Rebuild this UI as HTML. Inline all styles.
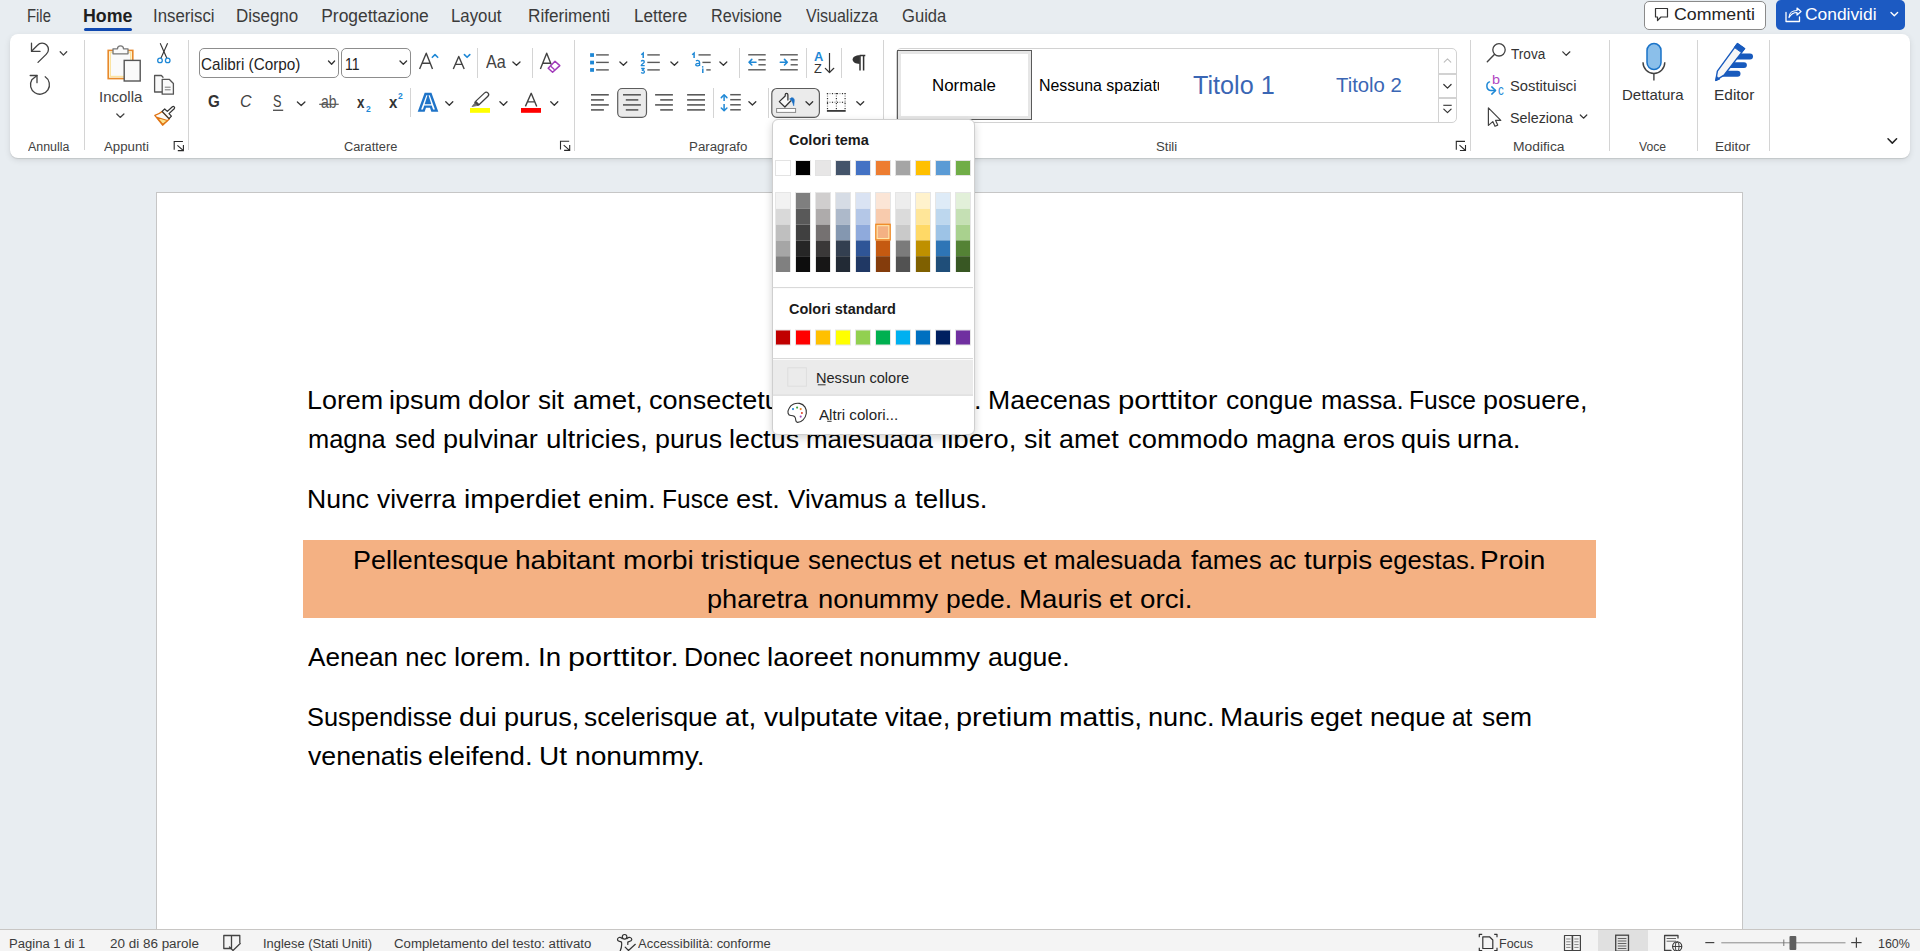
<!DOCTYPE html>
<html><head><meta charset="utf-8"><style>
html,body{margin:0;padding:0;width:1920px;height:951px;overflow:hidden;background:#e8edf1;position:relative;font-family:"Liberation Sans",sans-serif}
.t{position:absolute;white-space:nowrap;transform-origin:0 0}
svg{position:absolute;overflow:visible}
</style></head><body>
<div class="t" style="left:27.15px;top:7.97px;font-size:17.44px;line-height:17.44px;color:#3b3b3b;transform:scaleX(0.8519);">File</div>
<div class="t" style="left:82.98px;top:7.97px;font-size:17.44px;line-height:17.44px;color:#1f1f1f;font-weight:700;transform:scaleX(1.0213);">Home</div>
<div class="t" style="left:153.24px;top:7.97px;font-size:17.44px;line-height:17.44px;color:#3b3b3b;transform:scaleX(0.9629);">Inserisci</div>
<div class="t" style="left:236.43px;top:7.97px;font-size:17.44px;line-height:17.44px;color:#3b3b3b;transform:scaleX(0.9714);">Disegno</div>
<div class="t" style="left:321.20px;top:7.97px;font-size:17.44px;line-height:17.44px;color:#3b3b3b;">Progettazione</div>
<div class="t" style="left:451.44px;top:7.97px;font-size:17.44px;line-height:17.44px;color:#3b3b3b;transform:scaleX(0.9635);">Layout</div>
<div class="t" style="left:527.72px;top:7.97px;font-size:17.44px;line-height:17.44px;color:#3b3b3b;transform:scaleX(0.9841);">Riferimenti</div>
<div class="t" style="left:633.62px;top:7.97px;font-size:17.44px;line-height:17.44px;color:#3b3b3b;transform:scaleX(0.9811);">Lettere</div>
<div class="t" style="left:710.67px;top:7.97px;font-size:17.44px;line-height:17.44px;color:#3b3b3b;transform:scaleX(0.9280);">Revisione</div>
<div class="t" style="left:806.40px;top:7.97px;font-size:17.44px;line-height:17.44px;color:#3b3b3b;transform:scaleX(0.9203);">Visualizza</div>
<div class="t" style="left:902.15px;top:7.97px;font-size:17.44px;line-height:17.44px;color:#3b3b3b;transform:scaleX(0.9522);">Guida</div>
<div style="position:absolute;left:84px;top:28px;width:48px;height:3px;border-radius:2px;background:#0f48b0"></div>
<div style="position:absolute;left:1644px;top:1px;width:122px;height:29px;border:1px solid #8a8a8a;border-radius:5px;background:#fff;box-sizing:border-box"></div>
<div class="t" style="left:1673.55px;top:6.87px;font-size:16.86px;line-height:16.86px;color:#242424;transform:scaleX(1.0533);">Commenti</div>
<div style="position:absolute;left:1776px;top:0px;width:129px;height:30px;border-radius:5px;background:#1c5ac2"></div>
<div class="t" style="left:1805.37px;top:6.87px;font-size:16.86px;line-height:16.86px;color:#fff;transform:scaleX(1.0309);">Condividi</div>
<svg style="position:absolute;left:0;top:0" width="1920" height="951" viewBox="0 0 1920 951"><path d="M1655.5,8.5 H1667.5 V17 H1661 L1657.5,20.5 V17 H1655.5 Z" fill="none" stroke="#333" stroke-width="1.2" stroke-linejoin="round" stroke-linecap="round" /><path d="M1786,12.5 V21.5 H1799.5 V17" fill="none" stroke="#fff" stroke-width="1.3" stroke-linejoin="round" stroke-linecap="round" /><path d="M1789,17.5 C1789,12.5 1793,10.5 1797,10.5 V8 L1801,11.5 L1797,15 V12.5 C1794,12.5 1791,14 1789,17.5 Z" fill="none" stroke="#fff" stroke-width="1.2" stroke-linejoin="round" stroke-linecap="round" /><polyline points="1891,12.5 1894.3,15.8 1897.6,12.5" fill="none" stroke="#fff" stroke-width="1.4" stroke-linecap="round" stroke-linejoin="round"/></svg>
<div style="position:absolute;left:10px;top:34px;width:1900px;height:124px;background:#fff;border-radius:8px;box-shadow:0 1px 1px rgba(0,0,0,0.10),0 2px 6px rgba(0,0,0,0.10)"></div>
<div style="position:absolute;left:84.3px;top:40px;width:1px;height:110px;background:#d4d4d4"></div>
<div style="position:absolute;left:188.2px;top:40px;width:1px;height:110px;background:#d4d4d4"></div>
<div style="position:absolute;left:574.0px;top:40px;width:1px;height:111px;background:#d4d4d4"></div>
<div style="position:absolute;left:883.0px;top:40px;width:1px;height:111px;background:#d4d4d4"></div>
<div style="position:absolute;left:1470.0px;top:40px;width:1px;height:111px;background:#d4d4d4"></div>
<div style="position:absolute;left:1609.1px;top:40px;width:1px;height:111px;background:#d4d4d4"></div>
<div style="position:absolute;left:1696.9px;top:40px;width:1px;height:111px;background:#d4d4d4"></div>
<div style="position:absolute;left:1769.0px;top:40px;width:1px;height:111px;background:#d4d4d4"></div>
<div style="position:absolute;left:477.0px;top:48px;width:1px;height:30px;background:#d4d4d4"></div>
<div style="position:absolute;left:532.0px;top:48px;width:1px;height:30px;background:#d4d4d4"></div>
<div style="position:absolute;left:409.8px;top:88px;width:1px;height:29px;background:#d4d4d4"></div>
<div style="position:absolute;left:739.0px;top:48px;width:1px;height:30px;background:#d4d4d4"></div>
<div style="position:absolute;left:806.1px;top:48px;width:1px;height:30px;background:#d4d4d4"></div>
<div style="position:absolute;left:841.1px;top:48px;width:1px;height:30px;background:#d4d4d4"></div>
<div style="position:absolute;left:713.0px;top:88px;width:1px;height:30px;background:#d4d4d4"></div>
<div style="position:absolute;left:768.0px;top:88px;width:1px;height:30px;background:#d4d4d4"></div>
<div class="t" style="left:28.00px;top:140.88px;font-size:12.50px;line-height:12.50px;color:#424242;transform:scaleX(0.9929);">Annulla</div>
<div class="t" style="left:104.20px;top:140.88px;font-size:12.50px;line-height:12.50px;color:#424242;transform:scaleX(1.0595);">Appunti</div>
<div class="t" style="left:344.40px;top:140.88px;font-size:12.50px;line-height:12.50px;color:#424242;transform:scaleX(1.0231);">Carattere</div>
<div class="t" style="left:688.94px;top:140.88px;font-size:12.50px;line-height:12.50px;color:#424242;transform:scaleX(1.0648);">Paragrafo</div>
<div class="t" style="left:1155.95px;top:140.88px;font-size:12.50px;line-height:12.50px;color:#424242;transform:scaleX(1.0526);">Stili</div>
<div class="t" style="left:1512.64px;top:140.88px;font-size:12.50px;line-height:12.50px;color:#424242;transform:scaleX(1.1076);">Modifica</div>
<div class="t" style="left:1638.75px;top:140.88px;font-size:12.50px;line-height:12.50px;color:#424242;transform:scaleX(0.9732);">Voce</div>
<div class="t" style="left:1714.92px;top:140.88px;font-size:12.50px;line-height:12.50px;color:#424242;transform:scaleX(1.0812);">Editor</div>
<svg style="position:absolute;left:0;top:0" width="1920" height="951" viewBox="0 0 1920 951"><path d="M31.5,43.2 V51.4 H40" fill="none" stroke="#424242" stroke-width="1.3" stroke-linejoin="round" stroke-linecap="round" /><path d="M32,50.8 L37.5,45.2 A6.3,6.3 0 1 1 46.4,54.1 L38,62.4" fill="none" stroke="#424242" stroke-width="1.3" stroke-linejoin="round" stroke-linecap="round" /><polyline points="60.2,51.7 63.4,55.1 66.7,51.7" fill="none" stroke="#424242" stroke-width="1.3" stroke-linecap="round" stroke-linejoin="round"/><path d="M45.2,76.8 A9.5,9.5 0 1 1 31.8,79.8 L37,75.5" fill="none" stroke="#424242" stroke-width="1.3" stroke-linejoin="round" stroke-linecap="round" /><path d="M30.2,75.5 H37 V82.7" fill="none" stroke="#424242" stroke-width="1.3" stroke-linejoin="round" stroke-linecap="round" /><rect x="108.2" y="50.4" width="24.6" height="28.2" rx="0" fill="#fdf6dc" stroke="#e8892b" stroke-width="1.6" /><rect x="110.4" y="52.6" width="20.2" height="23.8" rx="0" fill="#fafafa" stroke="#fbe3a0" stroke-width="1.2" /><path d="M113,53.8 V48.8 H117.5 A3,3 0 0 1 123.5,48.8 H128 V53.8 Z" fill="#fafafa" stroke="#777" stroke-width="1.3" stroke-linejoin="round" stroke-linecap="round" /><rect x="124.2" y="60.4" width="16" height="20.6" rx="0" fill="#fafafa" stroke="#555" stroke-width="1.4" /><polyline points="116.8,114 120.2,117.4 123.9,114" fill="none" stroke="#424242" stroke-width="1.3" stroke-linecap="round" stroke-linejoin="round"/><line x1="160.2" y1="43.3" x2="166.9" y2="58.2" stroke="#333" stroke-width="1.1" stroke-linecap="butt"/><line x1="167.6" y1="43.3" x2="160.9" y2="58.2" stroke="#333" stroke-width="1.1" stroke-linecap="butt"/><circle cx="160" cy="60.4" r="2.3" fill="none" stroke="#1e88d6" stroke-width="1.3"/><circle cx="167.7" cy="60.4" r="2.3" fill="none" stroke="#1e88d6" stroke-width="1.3"/><path d="M162.8,92 H154.6 V75.5 H161.4 L163,77.2" fill="#fafafa" stroke="#555" stroke-width="1.3" stroke-linejoin="round" stroke-linecap="round" /><path d="M162.2,79.3 H169.2 L173.4,83.5 V94.2 H162.2 Z" fill="#fafafa" stroke="#555" stroke-width="1.3" stroke-linejoin="round" stroke-linecap="round" /><line x1="164.8" y1="87.2" x2="170.6" y2="87.2" stroke="#777" stroke-width="1" stroke-linecap="butt"/><line x1="164.8" y1="89.8" x2="170.6" y2="89.8" stroke="#777" stroke-width="1" stroke-linecap="butt"/><path d="M162.1,111.6 C159.6,113.8 157.2,114.8 154.8,115.3 L162.6,125.2 L169.3,119 Z" fill="#fafafa" stroke="#e07312" stroke-width="1.3" stroke-linejoin="round" stroke-linecap="round" /><path d="M156.8,117.2 L167.4,120.6 L162.7,124.4 Z" fill="#fbe38e" stroke="#e07312" stroke-width="1.1" stroke-linejoin="round" stroke-linecap="round" /><path d="M162.1,111.4 L164.7,109 L167.3,111.4 L172.4,106.7 A1.35,1.35 0 0 1 174.2,108.7 L169,113.6 L171.4,116.1 L169.1,118.6 Z" fill="#fafafa" stroke="#333" stroke-width="1.25" stroke-linejoin="round" stroke-linecap="round" /></svg>
<div class="t" style="left:98.51px;top:88.95px;font-size:15.12px;line-height:15.12px;color:#424242;transform:scaleX(0.9930);">Incolla</div>
<div style="position:absolute;left:199px;top:48px;width:140px;height:30px;border:1px solid #8d8d8d;border-radius:5px;box-sizing:border-box;background:#fff"></div>
<div style="position:absolute;left:341px;top:48px;width:70px;height:30px;border:1px solid #8d8d8d;border-radius:5px;box-sizing:border-box;background:#fff"></div>
<div class="t" style="left:201.24px;top:56.51px;font-size:15.99px;line-height:15.99px;color:#242424;transform:scaleX(0.9559);">Calibri (Corpo)</div>
<div class="t" style="left:344.52px;top:56.51px;font-size:15.99px;line-height:15.99px;color:#242424;transform:scaleX(0.8800);">11</div>
<svg style="position:absolute;left:0;top:0" width="1920" height="951" viewBox="0 0 1920 951"><polyline points="328.5,61 331.6,64.3 334.6,61" fill="none" stroke="#333" stroke-width="1.3" stroke-linecap="round" stroke-linejoin="round"/><polyline points="400,61 403.3,64.3 406.6,61" fill="none" stroke="#333" stroke-width="1.3" stroke-linecap="round" stroke-linejoin="round"/><path d="M419.6,69 L426.25,53.2 L432.5,69 M422.1,63.2 H430" fill="none" stroke="#424242" stroke-width="1.4" stroke-linejoin="round" stroke-linecap="butt"/><polyline points="432.3,57.3 435,54.6 437.7,57.3" fill="none" stroke="#1e88d6" stroke-width="1.6" stroke-linecap="round" stroke-linejoin="round"/><path d="M453.3,69 L458.75,56.5 L464.2,69 M455.3,64.4 H462.2" fill="none" stroke="#424242" stroke-width="1.4" stroke-linejoin="round" stroke-linecap="butt"/><polyline points="464.4,54.6 467.1,57.3 469.8,54.6" fill="none" stroke="#1e88d6" stroke-width="1.6" stroke-linecap="round" stroke-linejoin="round"/><polyline points="512.9,62 516.5,65.3 520,62" fill="none" stroke="#333" stroke-width="1.3" stroke-linecap="round" stroke-linejoin="round"/><path d="M540.4,69 L546.7,53.2 L551.2,64.5 M542.8,63.3 H550.5" fill="none" stroke="#424242" stroke-width="1.4" stroke-linejoin="round" stroke-linecap="butt"/><path d="M548.2,68.2 L555,61.3 L559.8,65.6 L552.6,72.3 Z" fill="#fff" stroke="#a23bbb" stroke-width="1.5" stroke-linejoin="round" stroke-linecap="round" /><line x1="550.5" y1="66" x2="554.6" y2="69.8" stroke="#a23bbb" stroke-width="1.3" stroke-linecap="butt"/><line x1="273" y1="110.3" x2="283.2" y2="110.3" stroke="#555" stroke-width="1.4" stroke-linecap="butt"/><polyline points="297.4,102 301.2,105.5 304.9,102" fill="none" stroke="#333" stroke-width="1.3" stroke-linecap="round" stroke-linejoin="round"/><line x1="319.2" y1="104.3" x2="338.7" y2="104.3" stroke="#555" stroke-width="1.2" stroke-linecap="butt"/><path d="M419.4,110.6 L425.5,94 H430.6 L436.6,110.6 H432.2 L430.9,106.6 H425.1 L423.8,110.6 Z M426.3,103 H429.7 L428,97.6 Z" fill="#fff" stroke="#1f74c8" stroke-width="2.4" stroke-linecap="round" stroke-linejoin="miter"/><polyline points="445.75,101.8 449.3,105.3 452.8,101.8" fill="none" stroke="#333" stroke-width="1.3" stroke-linecap="round" stroke-linejoin="round"/><path d="M475,102.8 L472,106.6 L477.6,105.4 Z" fill="#707070" stroke="#707070" stroke-width="0.8" stroke-linejoin="round" stroke-linecap="round" /><path d="M475.6,101.4 L484.6,92.9 A2.3,2.3 0 0 1 487.9,96.2 L479,104.8 Z" fill="#fff" stroke="#424242" stroke-width="1.3" stroke-linejoin="round" stroke-linecap="round" /><path d="M474.9,102.2 L478.1,105.4" fill="none" stroke="#424242" stroke-width="1.3" stroke-linejoin="round" stroke-linecap="round" /><rect x="470" y="108" width="20" height="4.8" rx="0" fill="#ffff00" stroke="none" stroke-width="1" /><polyline points="499.9,101.8 503.5,105.3 507,101.8" fill="none" stroke="#333" stroke-width="1.3" stroke-linecap="round" stroke-linejoin="round"/><path d="M525.4,106.4 L531.2,93.3 L536.75,106.4 M527.3,101.9 H535" fill="none" stroke="#424242" stroke-width="1.4" stroke-linejoin="round" stroke-linecap="butt"/><rect x="521" y="108" width="20" height="4.8" rx="0" fill="#ff0000" stroke="none" stroke-width="1" /><polyline points="550.75,101.8 554.3,105.3 557.8,101.8" fill="none" stroke="#333" stroke-width="1.3" stroke-linecap="round" stroke-linejoin="round"/></svg>
<div class="t" style="left:485.50px;top:54.17px;font-size:17.44px;line-height:17.44px;color:#424242;transform:scaleX(0.9273);">Aa</div>
<div class="t" style="left:208.00px;top:92.92px;font-size:17.15px;line-height:17.15px;color:#333;font-weight:700;transform:scaleX(0.8846);">G</div>
<div class="t" style="left:239.76px;top:93.42px;font-size:17.15px;line-height:17.15px;color:#424242;transform:scaleX(0.9364);font-style:italic;">C</div>
<div class="t" style="left:273.26px;top:93.42px;font-size:17.15px;line-height:17.15px;color:#424242;transform:scaleX(0.7400);">S</div>
<div class="t" style="left:321.00px;top:92.86px;font-size:18.17px;line-height:18.17px;color:#555;transform:scaleX(0.7700);">ab</div>
<div class="t" style="left:357.00px;top:94.46px;font-size:16.28px;line-height:16.28px;color:#333;font-weight:700;transform:scaleX(0.8222);">x</div>
<div class="t" style="left:365.60px;top:105.09px;font-size:9.30px;line-height:9.30px;color:#1e88d6;font-weight:700;transform:scaleX(0.9200);">2</div>
<div class="t" style="left:388.50px;top:94.46px;font-size:16.28px;line-height:16.28px;color:#333;font-weight:700;transform:scaleX(0.9222);">x</div>
<div class="t" style="left:397.70px;top:91.89px;font-size:9.30px;line-height:9.30px;color:#1e88d6;font-weight:700;transform:scaleX(0.9200);">2</div>
<svg style="position:absolute;left:0;top:0" width="1920" height="951" viewBox="0 0 1920 951"><path d="M174.2,149.8 V141.5 H182.89999999999998 M177.39999999999998,145.3 L183.39999999999998,150.6 M183.39999999999998,145.1 V150.6 H177.79999999999998" fill="none" stroke="#2a2a2a" stroke-width="1.1" stroke-linecap="butt" stroke-linejoin="miter"/><path d="M560.5,149.60000000000002 V141.3 H569.2 M563.7,145.10000000000002 L569.7,150.4 M569.7,144.9 V150.4 H564.1" fill="none" stroke="#2a2a2a" stroke-width="1.1" stroke-linecap="butt" stroke-linejoin="miter"/><path d="M1456.3,149.70000000000002 V141.4 H1465.0 M1459.5,145.20000000000002 L1465.5,150.5 M1465.5,145.0 V150.5 H1459.8999999999999" fill="none" stroke="#2a2a2a" stroke-width="1.1" stroke-linecap="butt" stroke-linejoin="miter"/><polyline points="1888,138.8 1892.3,143.1 1896.6,138.8" fill="none" stroke="#222" stroke-width="1.5" stroke-linecap="round" stroke-linejoin="round"/></svg>
<svg style="position:absolute;left:0;top:0" width="1920" height="951" viewBox="0 0 1920 951"><rect x="590.1" y="53.2" width="3.9" height="3.7" rx="0" fill="#1e88d6" stroke="none" stroke-width="1" /><rect x="590.1" y="60.7" width="3.9" height="3.7" rx="0" fill="#1e88d6" stroke="none" stroke-width="1" /><rect x="590.1" y="68.1" width="3.9" height="3.7" rx="0" fill="#1e88d6" stroke="none" stroke-width="1" /><line x1="596.1" y1="54.9" x2="608.8" y2="54.9" stroke="#5a5a5a" stroke-width="1.4" stroke-linecap="butt"/><line x1="596.1" y1="62.4" x2="608.8" y2="62.4" stroke="#5a5a5a" stroke-width="1.4" stroke-linecap="butt"/><line x1="596.1" y1="69.9" x2="608.8" y2="69.9" stroke="#5a5a5a" stroke-width="1.4" stroke-linecap="butt"/><polyline points="619.9,62 623.4,65.2 626.8,62" fill="none" stroke="#333" stroke-width="1.3" stroke-linecap="round" stroke-linejoin="round"/><line x1="647.3" y1="54.9" x2="659.8" y2="54.9" stroke="#5a5a5a" stroke-width="1.4" stroke-linecap="butt"/><line x1="647.3" y1="62.4" x2="659.8" y2="62.4" stroke="#5a5a5a" stroke-width="1.4" stroke-linecap="butt"/><line x1="647.3" y1="69.9" x2="659.8" y2="69.9" stroke="#5a5a5a" stroke-width="1.4" stroke-linecap="butt"/><polyline points="670.9,62 674.4,65.2 677.8,62" fill="none" stroke="#333" stroke-width="1.3" stroke-linecap="round" stroke-linejoin="round"/><line x1="698.5" y1="54.9" x2="710.7" y2="54.9" stroke="#5a5a5a" stroke-width="1.4" stroke-linecap="butt"/><line x1="702.4" y1="62.4" x2="710.7" y2="62.4" stroke="#5a5a5a" stroke-width="1.4" stroke-linecap="butt"/><line x1="706.3" y1="69.9" x2="710.7" y2="69.9" stroke="#5a5a5a" stroke-width="1.4" stroke-linecap="butt"/><polyline points="719.9,62 723.4,65.2 726.8,62" fill="none" stroke="#333" stroke-width="1.3" stroke-linecap="round" stroke-linejoin="round"/><line x1="748.2" y1="54.8" x2="765.7" y2="54.8" stroke="#5a5a5a" stroke-width="1.4" stroke-linecap="butt"/><line x1="758.4" y1="59.8" x2="765.7" y2="59.8" stroke="#5a5a5a" stroke-width="1.4" stroke-linecap="butt"/><line x1="758.4" y1="64.8" x2="765.7" y2="64.8" stroke="#5a5a5a" stroke-width="1.4" stroke-linecap="butt"/><line x1="748.2" y1="69.8" x2="765.7" y2="69.8" stroke="#5a5a5a" stroke-width="1.4" stroke-linecap="butt"/><line x1="780.1" y1="54.8" x2="797.8" y2="54.8" stroke="#5a5a5a" stroke-width="1.4" stroke-linecap="butt"/><line x1="790.6" y1="59.8" x2="797.8" y2="59.8" stroke="#5a5a5a" stroke-width="1.4" stroke-linecap="butt"/><line x1="790.6" y1="64.8" x2="797.8" y2="64.8" stroke="#5a5a5a" stroke-width="1.4" stroke-linecap="butt"/><line x1="780.1" y1="69.8" x2="797.8" y2="69.8" stroke="#5a5a5a" stroke-width="1.4" stroke-linecap="butt"/><path d="M756,62.2 H749 M751.8,59.4 L749,62.2 L751.8,65" fill="none" stroke="#1e88d6" stroke-width="1.6" stroke-linejoin="round" stroke-linecap="round" /><path d="M780.3,62.2 H787.3 M784.5,59.4 L787.3,62.2 L784.5,65" fill="none" stroke="#1e88d6" stroke-width="1.6" stroke-linejoin="round" stroke-linecap="round" /><line x1="829.5" y1="53" x2="829.5" y2="72.4" stroke="#333" stroke-width="1.2" stroke-linecap="butt"/><polyline points="825.3,68.3 829.5,72.5 833.8,68.3" fill="none" stroke="#333" stroke-width="1.2" stroke-linecap="round" stroke-linejoin="round"/><line x1="591" y1="94.8" x2="608.8" y2="94.8" stroke="#5a5a5a" stroke-width="1.6" stroke-linecap="butt"/><line x1="591" y1="99.9" x2="603.9" y2="99.9" stroke="#5a5a5a" stroke-width="1.6" stroke-linecap="butt"/><line x1="591" y1="104.9" x2="608.8" y2="104.9" stroke="#5a5a5a" stroke-width="1.6" stroke-linecap="butt"/><line x1="591" y1="109.9" x2="603.9" y2="109.9" stroke="#5a5a5a" stroke-width="1.6" stroke-linecap="butt"/><rect x="617.7" y="88.5" width="28.8" height="28.8" rx="4.5" fill="#ebebeb" stroke="#5c5c5c" stroke-width="1.2" /><line x1="623" y1="94.8" x2="640.9" y2="94.8" stroke="#5a5a5a" stroke-width="1.6" stroke-linecap="butt"/><line x1="625.8" y1="99.9" x2="638.3" y2="99.9" stroke="#5a5a5a" stroke-width="1.6" stroke-linecap="butt"/><line x1="623" y1="104.9" x2="640.9" y2="104.9" stroke="#5a5a5a" stroke-width="1.6" stroke-linecap="butt"/><line x1="625.8" y1="109.9" x2="638.3" y2="109.9" stroke="#5a5a5a" stroke-width="1.6" stroke-linecap="butt"/><line x1="655.1" y1="94.8" x2="672.9" y2="94.8" stroke="#5a5a5a" stroke-width="1.6" stroke-linecap="butt"/><line x1="660.2" y1="99.9" x2="672.9" y2="99.9" stroke="#5a5a5a" stroke-width="1.6" stroke-linecap="butt"/><line x1="655.1" y1="104.9" x2="672.9" y2="104.9" stroke="#5a5a5a" stroke-width="1.6" stroke-linecap="butt"/><line x1="660.2" y1="109.9" x2="672.9" y2="109.9" stroke="#5a5a5a" stroke-width="1.6" stroke-linecap="butt"/><line x1="687.1" y1="94.8" x2="705" y2="94.8" stroke="#5a5a5a" stroke-width="1.6" stroke-linecap="butt"/><line x1="687.1" y1="99.9" x2="705" y2="99.9" stroke="#5a5a5a" stroke-width="1.6" stroke-linecap="butt"/><line x1="687.1" y1="104.9" x2="705" y2="104.9" stroke="#5a5a5a" stroke-width="1.6" stroke-linecap="butt"/><line x1="687.1" y1="109.9" x2="705" y2="109.9" stroke="#5a5a5a" stroke-width="1.6" stroke-linecap="butt"/><line x1="724.1" y1="95" x2="724.1" y2="101" stroke="#1e88d6" stroke-width="1.5" stroke-linecap="butt"/><polyline points="721.3,97.6 724.1,94.8 726.9,97.6" fill="none" stroke="#1e88d6" stroke-width="1.5" stroke-linecap="round" stroke-linejoin="round"/><line x1="724.1" y1="104" x2="724.1" y2="110.5" stroke="#1e88d6" stroke-width="1.5" stroke-linecap="butt"/><polyline points="721.3,108 724.1,110.8 726.9,108" fill="none" stroke="#1e88d6" stroke-width="1.5" stroke-linecap="round" stroke-linejoin="round"/><line x1="730.2" y1="94.7" x2="740.8" y2="94.7" stroke="#5a5a5a" stroke-width="1.5" stroke-linecap="butt"/><line x1="730.2" y1="99.7" x2="740.8" y2="99.7" stroke="#5a5a5a" stroke-width="1.5" stroke-linecap="butt"/><line x1="730.2" y1="104.8" x2="740.8" y2="104.8" stroke="#5a5a5a" stroke-width="1.5" stroke-linecap="butt"/><line x1="730.2" y1="109.8" x2="740.8" y2="109.8" stroke="#5a5a5a" stroke-width="1.5" stroke-linecap="butt"/><polyline points="748.9,101.7 752.4,105 755.8,101.7" fill="none" stroke="#333" stroke-width="1.3" stroke-linecap="round" stroke-linejoin="round"/><rect x="771.8" y="88.5" width="47.6" height="28.8" rx="5" fill="#ebebeb" stroke="#5c5c5c" stroke-width="1.2" /><path d="M785.3,96 L779.3,101.6 L784.9,107 L790.9,100.8 L788,98.5 Z" fill="#fafafa" stroke="none" stroke-width="0" stroke-linejoin="round" stroke-linecap="round" /><path d="M787.9,100 V94.7 A1.35,1.35 0 0 0 785.2,94.7 V96 L779.3,101.6 L784.9,107 L790.9,100.8" fill="none" stroke="#333" stroke-width="1.25" stroke-linejoin="round" stroke-linecap="round" /><path d="M790.1,99 C790.8,96.8 794.6,97.2 794.3,100.6 L793.7,105.8 C793,103 792,100.6 790.1,99 Z" fill="#1a6fc4" stroke="#1a6fc4" stroke-width="0.6" stroke-linejoin="round" stroke-linecap="round" /><rect x="776.6" y="108.5" width="19" height="3.9" rx="0" fill="#fff" stroke="#8a8a8a" stroke-width="1" /><polyline points="806,101.7 809.4,105 812.7,101.7" fill="none" stroke="#333" stroke-width="1.3" stroke-linecap="round" stroke-linejoin="round"/><rect x="826.9" y="93.0" width="1.2" height="1.2" rx="0" fill="#333" stroke="none" stroke-width="1" /><rect x="826.9" y="101.7" width="1.2" height="1.2" rx="0" fill="#333" stroke="none" stroke-width="1" /><rect x="829.4" y="93.0" width="1.2" height="1.2" rx="0" fill="#9a9a9a" stroke="none" stroke-width="1" /><rect x="829.4" y="101.7" width="1.2" height="1.2" rx="0" fill="#9a9a9a" stroke="none" stroke-width="1" /><rect x="831.9" y="93.0" width="1.2" height="1.2" rx="0" fill="#333" stroke="none" stroke-width="1" /><rect x="831.9" y="101.7" width="1.2" height="1.2" rx="0" fill="#333" stroke="none" stroke-width="1" /><rect x="834.4" y="93.0" width="1.2" height="1.2" rx="0" fill="#9a9a9a" stroke="none" stroke-width="1" /><rect x="834.4" y="101.7" width="1.2" height="1.2" rx="0" fill="#9a9a9a" stroke="none" stroke-width="1" /><rect x="836.9" y="93.0" width="1.2" height="1.2" rx="0" fill="#333" stroke="none" stroke-width="1" /><rect x="836.9" y="101.7" width="1.2" height="1.2" rx="0" fill="#333" stroke="none" stroke-width="1" /><rect x="839.4" y="93.0" width="1.2" height="1.2" rx="0" fill="#9a9a9a" stroke="none" stroke-width="1" /><rect x="839.4" y="101.7" width="1.2" height="1.2" rx="0" fill="#9a9a9a" stroke="none" stroke-width="1" /><rect x="841.9" y="93.0" width="1.2" height="1.2" rx="0" fill="#333" stroke="none" stroke-width="1" /><rect x="841.9" y="101.7" width="1.2" height="1.2" rx="0" fill="#333" stroke="none" stroke-width="1" /><rect x="844.4" y="93.0" width="1.2" height="1.2" rx="0" fill="#9a9a9a" stroke="none" stroke-width="1" /><rect x="844.4" y="101.7" width="1.2" height="1.2" rx="0" fill="#9a9a9a" stroke="none" stroke-width="1" /><rect x="826.9" y="93.0" width="1.2" height="1.2" rx="0" fill="#333" stroke="none" stroke-width="1" /><rect x="835.8" y="93.0" width="1.2" height="1.2" rx="0" fill="#333" stroke="none" stroke-width="1" /><rect x="844.5" y="93.0" width="1.2" height="1.2" rx="0" fill="#333" stroke="none" stroke-width="1" /><rect x="826.9" y="95.5" width="1.2" height="1.2" rx="0" fill="#9a9a9a" stroke="none" stroke-width="1" /><rect x="835.8" y="95.5" width="1.2" height="1.2" rx="0" fill="#9a9a9a" stroke="none" stroke-width="1" /><rect x="844.5" y="95.5" width="1.2" height="1.2" rx="0" fill="#9a9a9a" stroke="none" stroke-width="1" /><rect x="826.9" y="98.0" width="1.2" height="1.2" rx="0" fill="#333" stroke="none" stroke-width="1" /><rect x="835.8" y="98.0" width="1.2" height="1.2" rx="0" fill="#333" stroke="none" stroke-width="1" /><rect x="844.5" y="98.0" width="1.2" height="1.2" rx="0" fill="#333" stroke="none" stroke-width="1" /><rect x="826.9" y="100.5" width="1.2" height="1.2" rx="0" fill="#9a9a9a" stroke="none" stroke-width="1" /><rect x="835.8" y="100.5" width="1.2" height="1.2" rx="0" fill="#9a9a9a" stroke="none" stroke-width="1" /><rect x="844.5" y="100.5" width="1.2" height="1.2" rx="0" fill="#9a9a9a" stroke="none" stroke-width="1" /><rect x="826.9" y="103.0" width="1.2" height="1.2" rx="0" fill="#333" stroke="none" stroke-width="1" /><rect x="835.8" y="103.0" width="1.2" height="1.2" rx="0" fill="#333" stroke="none" stroke-width="1" /><rect x="844.5" y="103.0" width="1.2" height="1.2" rx="0" fill="#333" stroke="none" stroke-width="1" /><rect x="826.9" y="105.5" width="1.2" height="1.2" rx="0" fill="#9a9a9a" stroke="none" stroke-width="1" /><rect x="835.8" y="105.5" width="1.2" height="1.2" rx="0" fill="#9a9a9a" stroke="none" stroke-width="1" /><rect x="844.5" y="105.5" width="1.2" height="1.2" rx="0" fill="#9a9a9a" stroke="none" stroke-width="1" /><rect x="826.9" y="108.0" width="1.2" height="1.2" rx="0" fill="#333" stroke="none" stroke-width="1" /><rect x="835.8" y="108.0" width="1.2" height="1.2" rx="0" fill="#333" stroke="none" stroke-width="1" /><rect x="844.5" y="108.0" width="1.2" height="1.2" rx="0" fill="#333" stroke="none" stroke-width="1" /><line x1="826.9" y1="110.9" x2="845.7" y2="110.9" stroke="#3a3a3a" stroke-width="1.8" stroke-linecap="butt"/><polyline points="856.8,101.7 860.3,105 863.7,101.7" fill="none" stroke="#333" stroke-width="1.3" stroke-linecap="round" stroke-linejoin="round"/></svg>
<svg style="position:absolute;left:0;top:0" width="1920" height="951" viewBox="0 0 1920 951"><path d="M641.3,54.800000000000004 L643.1999999999999,53.2 V58.0" fill="none" stroke="#1e88d6" stroke-width="1.5" stroke-linecap="butt" stroke-linejoin="miter"/><path d="M692.2,54.800000000000004 L694.1,53.2 V58.0" fill="none" stroke="#1e88d6" stroke-width="1.5" stroke-linecap="butt" stroke-linejoin="miter"/><path d="M641.2,61.5 C641.6,60.2 644.3,60 644.3,61.9 C644.3,63.2 641.3,64.3 641.2,65.6 H644.7" fill="none" stroke="#1e88d6" stroke-width="1.3" stroke-linejoin="round" stroke-linecap="butt"/><path d="M641.2,68.5 H644.2 L642.3,70.4 C645,70.2 645.1,73.1 642.6,73.1 C642,73.1 641.5,72.9 641.1,72.6" fill="none" stroke="#1e88d6" stroke-width="1.3" stroke-linejoin="round" stroke-linecap="butt"/><path d="M696,61 C697,60.1 699.6,60.2 699.6,62.4 V66.1 M699.6,63.4 C697.2,63.2 695.7,63.8 695.7,64.8 C695.7,66.2 698.2,66.4 699.6,65" fill="none" stroke="#1e88d6" stroke-width="1.3" stroke-linejoin="round" stroke-linecap="butt"/><circle cx="702.7" cy="66.9" r="0.8" fill="#1e88d6"/><line x1="702.8" y1="68.4" x2="702.8" y2="73.1" stroke="#1e88d6" stroke-width="1.5" stroke-linecap="butt"/></svg>
<div class="t" style="left:813.90px;top:51.43px;font-size:12.79px;line-height:12.79px;color:#1e88d6;font-weight:700;transform:scaleX(1.0111);">A</div>
<div class="t" style="left:814.20px;top:63.02px;font-size:12.21px;line-height:12.21px;color:#333;transform:scaleX(1.0429);">Z</div>
<svg style="position:absolute;left:0;top:0" width="1920" height="951" viewBox="0 0 1920 951"><path d="M859.6,55.6 H865.3 M860,55.6 V70.4 M863.6,55.6 V70.4" fill="none" stroke="#333" stroke-width="1.5" stroke-linejoin="round" stroke-linecap="butt"/><path d="M859.8,55.2 C855.5,55.2 852.6,57 852.6,59.6 C852.6,62.3 855.5,64 859.8,64 Z" fill="#333" stroke="none" stroke-width="0" stroke-linejoin="round" stroke-linecap="round" /></svg>
<div style="position:absolute;left:895.5px;top:48px;width:561.5px;height:74.5px;border:1px solid #d2d2d2;border-radius:5px;box-sizing:border-box;background:#fff"></div>
<div style="position:absolute;left:1438.2px;top:48.5px;width:1px;height:73.5px;background:#d2d2d2"></div>
<div style="position:absolute;left:1438.5px;top:73px;width:18px;height:1.6px;background:#d2d2d2"></div>
<div style="position:absolute;left:1438.5px;top:97px;width:18px;height:1.6px;background:#d2d2d2"></div>
<div style="position:absolute;left:897px;top:50px;width:135px;height:70px;border:1px solid #5a5a5a;box-sizing:border-box;background:#fff"></div>
<div style="position:absolute;left:898px;top:51px;width:133px;height:68px;border:3.5px solid #e6e6e6;box-sizing:border-box"></div>
<div class="t" style="left:931.98px;top:78.12px;font-size:16.57px;line-height:16.57px;color:#000;transform:scaleX(1.0197);">Normale</div>
<div style="position:absolute;left:1036px;top:60px;width:123px;height:50px;overflow:hidden"><div class="t" style="left:2.94px;top:18.12px;font-size:16.57px;line-height:16.57px;color:#000;transform:scaleX(0.9623);">Nessuna spaziatu</div></div>
<div class="t" style="left:1193.30px;top:72.50px;font-size:25.29px;line-height:25.29px;color:#3a66b4;transform:scaleX(0.9963);">Titolo 1</div>
<div class="t" style="left:1336.30px;top:74.66px;font-size:20.64px;line-height:20.64px;color:#3a66b4;transform:scaleX(0.9848);">Titolo 2</div>
<svg style="position:absolute;left:0;top:0" width="1920" height="951" viewBox="0 0 1920 951"><polyline points="1444.2,62.2 1447.5,58.9 1450.8,62.2" fill="none" stroke="#bdbdbd" stroke-width="1.1" stroke-linecap="round" stroke-linejoin="round"/><polyline points="1443.8,84.5 1447.5,88.2 1451.1,84.5" fill="none" stroke="#333" stroke-width="1.2" stroke-linecap="round" stroke-linejoin="round"/><line x1="1443.3" y1="105.3" x2="1451.7" y2="105.3" stroke="#333" stroke-width="1.1" stroke-linecap="butt"/><polyline points="1443.8,109.1 1447.5,112.6 1451.1,109.1" fill="none" stroke="#333" stroke-width="1.2" stroke-linecap="round" stroke-linejoin="round"/></svg>
<svg style="position:absolute;left:0;top:0" width="1920" height="951" viewBox="0 0 1920 951"><circle cx="1499" cy="49.8" r="6.2" fill="none" stroke="#424242" stroke-width="1.3"/><line x1="1494.4" y1="54.4" x2="1487.3" y2="61.8" stroke="#424242" stroke-width="1.4" stroke-linecap="round"/><polyline points="1562.8,51.8 1566.25,55.3 1569.9,51.8" fill="none" stroke="#333" stroke-width="1.2" stroke-linecap="round" stroke-linejoin="round"/><path d="M1489.5,81.9 C1485.8,83.2 1485.8,90.5 1491,90.5 H1495.3" fill="none" stroke="#1e88d6" stroke-width="1.5" stroke-linejoin="round" stroke-linecap="round" /><polyline points="1491.8,86.9 1495.6,90.5 1491.8,94.1" fill="none" stroke="#1e88d6" stroke-width="1.5" stroke-linecap="round" stroke-linejoin="round"/><path d="M1488.4,107.9 L1500.8,120.4 H1495.6 L1497.7,125.1 L1495,126.3 L1492.8,121.6 L1488.4,125.4 Z" fill="#fff" stroke="#424242" stroke-width="1.2" stroke-linejoin="round" stroke-linecap="round" /><polyline points="1580.3,115 1583.5,118.2 1586.8,115" fill="none" stroke="#333" stroke-width="1.2" stroke-linecap="round" stroke-linejoin="round"/><rect x="1647" y="43.6" width="14" height="26" rx="7" fill="#8bbfea" stroke="#1a73c8" stroke-width="1.5"/><path d="M1643,62.3 A10.9,11.2 0 0 0 1664.8,62.3" fill="none" stroke="#424242" stroke-width="1.4" stroke-linejoin="round" stroke-linecap="butt"/><line x1="1653.9" y1="73.5" x2="1653.9" y2="80.6" stroke="#424242" stroke-width="1.4" stroke-linecap="butt"/><path d="M1737,53.4 H1750 A3,3 0 0 1 1750,59.4 H1735 Z" fill="#185abd" stroke="none" stroke-width="0" stroke-linejoin="round" stroke-linecap="round" /><path d="M1731,62.2 H1744 A2.9,2.9 0 0 1 1744,68 H1728 Z" fill="#185abd" stroke="none" stroke-width="0" stroke-linejoin="round" stroke-linecap="round" /><path d="M1724,70.8 H1737.5 A3,3 0 0 1 1737.5,76.8 H1721 Z" fill="#185abd" stroke="none" stroke-width="0" stroke-linejoin="round" stroke-linecap="round" /><path d="M1715.8,80.3 L1717.4,71.2 L1737.5,43.6 L1744.6,48.6 L1724.4,74.8 Z" fill="#f7f7f7" stroke="#185abd" stroke-width="1.4" stroke-linejoin="round" stroke-linecap="round" /><path d="M1737.5,43.6 L1744.6,48.6 L1741.6,52.6 L1734.6,47.6 Z" fill="#185abd" stroke="#185abd" stroke-width="1" stroke-linejoin="round" stroke-linecap="round" /><path d="M1715.8,80.3 L1716.6,76.5 L1719.5,78.8 Z" fill="#185abd" stroke="#185abd" stroke-width="1" stroke-linejoin="round" stroke-linecap="round" /></svg>
<div class="t" style="left:1511.40px;top:46.80px;font-size:14.83px;line-height:14.83px;color:#333;transform:scaleX(0.9184);">Trova</div>
<div class="t" style="left:1510.40px;top:78.80px;font-size:14.83px;line-height:14.83px;color:#333;transform:scaleX(0.9954);">Sostituisci</div>
<div class="t" style="left:1510.43px;top:110.90px;font-size:14.83px;line-height:14.83px;color:#333;transform:scaleX(0.9662);">Seleziona</div>
<div class="t" style="left:1492.08px;top:74.30px;font-size:12.94px;line-height:12.94px;color:#b146c2;transform:scaleX(1.1167);">b</div>
<div class="t" style="left:1498.30px;top:82.99px;font-size:14.24px;line-height:14.24px;color:#1e88d6;transform:scaleX(0.8143);">c</div>
<div class="t" style="left:1621.93px;top:86.90px;font-size:15.41px;line-height:15.41px;color:#333;transform:scaleX(0.9730);">Dettatura</div>
<div class="t" style="left:1713.60px;top:86.90px;font-size:15.41px;line-height:15.41px;color:#333;transform:scaleX(1.0026);">Editor</div>
<div style="position:absolute;left:156px;top:192px;width:1587px;height:737px;background:#fff;border:1px solid #c6c6c6;border-bottom:none;box-sizing:border-box"></div>
<div style="position:absolute;left:303px;top:540px;width:1293px;height:78px;background:#f4b183"></div>
<div class="t" style="left:306.65px;top:388.26px;font-size:25.58px;line-height:25.58px;color:#000;transform:scaleX(1.0507);">Lorem</div>
<div class="t" style="left:389.45px;top:388.26px;font-size:25.58px;line-height:25.58px;color:#000;transform:scaleX(1.0530);">ipsum</div>
<div class="t" style="left:468.41px;top:388.26px;font-size:25.58px;line-height:25.58px;color:#000;transform:scaleX(1.0893);">dolor</div>
<div class="t" style="left:538.48px;top:388.26px;font-size:25.58px;line-height:25.58px;color:#000;transform:scaleX(1.0200);">sit</div>
<div class="t" style="left:573.41px;top:388.26px;font-size:25.58px;line-height:25.58px;color:#000;transform:scaleX(1.0902);">amet,</div>
<div class="t" style="left:648.94px;top:388.26px;font-size:25.58px;line-height:25.58px;color:#000;transform:scaleX(1.0579);">consectetuer adipiscing elit.</div>
<div class="t" style="left:987.92px;top:388.26px;font-size:25.58px;line-height:25.58px;color:#000;transform:scaleX(1.0391);">Maecenas</div>
<div class="t" style="left:1117.60px;top:388.26px;font-size:25.58px;line-height:25.58px;color:#000;transform:scaleX(1.1483);">porttitor</div>
<div class="t" style="left:1226.46px;top:388.26px;font-size:25.58px;line-height:25.58px;color:#000;transform:scaleX(1.0366);">congue</div>
<div class="t" style="left:1321.00px;top:388.26px;font-size:25.58px;line-height:25.58px;color:#000;transform:scaleX(1.0032);">massa.</div>
<div class="t" style="left:1408.57px;top:388.26px;font-size:25.58px;line-height:25.58px;color:#000;transform:scaleX(0.9627);">Fusce</div>
<div class="t" style="left:1483.45px;top:388.26px;font-size:25.58px;line-height:25.58px;color:#000;transform:scaleX(1.0490);">posuere,</div>
<div class="t" style="left:307.76px;top:427.26px;font-size:25.58px;line-height:25.58px;color:#000;transform:scaleX(0.9936);">magna</div>
<div class="t" style="left:394.52px;top:427.26px;font-size:25.58px;line-height:25.58px;color:#000;transform:scaleX(0.9808);">sed</div>
<div class="t" style="left:443.44px;top:427.26px;font-size:25.58px;line-height:25.58px;color:#000;transform:scaleX(1.0590);">pulvinar</div>
<div class="t" style="left:546.41px;top:427.26px;font-size:25.58px;line-height:25.58px;color:#000;transform:scaleX(1.0852);">ultricies,</div>
<div class="t" style="left:655.20px;top:427.26px;font-size:25.58px;line-height:25.58px;color:#000;transform:scaleX(1.0484);">purus</div>
<div class="t" style="left:729.45px;top:427.26px;font-size:25.58px;line-height:25.58px;color:#000;transform:scaleX(1.0500);">lectus</div>
<div class="t" style="left:805.99px;top:427.26px;font-size:25.58px;line-height:25.58px;color:#000;transform:scaleX(1.0140);">malesuada</div>
<div class="t" style="left:941.42px;top:427.26px;font-size:25.58px;line-height:25.58px;color:#000;transform:scaleX(1.0821);">libero,</div>
<div class="t" style="left:1023.95px;top:427.26px;font-size:25.58px;line-height:25.58px;color:#000;transform:scaleX(1.0500);">sit</div>
<div class="t" style="left:1058.95px;top:427.26px;font-size:25.58px;line-height:25.58px;color:#000;transform:scaleX(1.0491);">amet</div>
<div class="t" style="left:1127.68px;top:427.26px;font-size:25.58px;line-height:25.58px;color:#000;transform:scaleX(1.0698);">commodo</div>
<div class="t" style="left:1255.99px;top:427.26px;font-size:25.58px;line-height:25.58px;color:#000;transform:scaleX(1.0064);">magna</div>
<div class="t" style="left:1342.71px;top:427.26px;font-size:25.58px;line-height:25.58px;color:#000;transform:scaleX(1.0417);">eros</div>
<div class="t" style="left:1401.44px;top:427.26px;font-size:25.58px;line-height:25.58px;color:#000;transform:scaleX(1.0556);">quis</div>
<div class="t" style="left:1456.91px;top:427.26px;font-size:25.58px;line-height:25.58px;color:#000;transform:scaleX(1.0909);">urna.</div>
<div class="t" style="left:306.67px;top:487.26px;font-size:25.58px;line-height:25.58px;color:#000;transform:scaleX(1.0395);">Nunc</div>
<div class="t" style="left:377.00px;top:487.26px;font-size:25.58px;line-height:25.58px;color:#000;transform:scaleX(1.0292);">viverra</div>
<div class="t" style="left:464.39px;top:487.26px;font-size:25.58px;line-height:25.58px;color:#000;transform:scaleX(1.1058);">imperdiet</div>
<div class="t" style="left:588.42px;top:487.26px;font-size:25.58px;line-height:25.58px;color:#000;transform:scaleX(1.0833);">enim.</div>
<div class="t" style="left:661.83px;top:487.26px;font-size:25.58px;line-height:25.58px;color:#000;transform:scaleX(0.9590);">Fusce</div>
<div class="t" style="left:735.93px;top:487.26px;font-size:25.58px;line-height:25.58px;color:#000;transform:scaleX(1.0658);">est.</div>
<div class="t" style="left:787.50px;top:487.26px;font-size:25.58px;line-height:25.58px;color:#000;transform:scaleX(1.0180);">Vivamus</div>
<div class="t" style="left:893.66px;top:487.26px;font-size:25.58px;line-height:25.58px;color:#000;transform:scaleX(0.8393);">a</div>
<div class="t" style="left:915.00px;top:487.26px;font-size:25.58px;line-height:25.58px;color:#000;transform:scaleX(1.0846);">tellus.</div>
<div class="t" style="left:353.40px;top:547.56px;font-size:25.58px;line-height:25.58px;color:#000;transform:scaleX(1.0517);">Pellentesque</div>
<div class="t" style="left:515.15px;top:547.56px;font-size:25.58px;line-height:25.58px;color:#000;transform:scaleX(1.0972);">habitant</div>
<div class="t" style="left:622.64px;top:547.56px;font-size:25.58px;line-height:25.58px;color:#000;transform:scaleX(1.1089);">morbi</div>
<div class="t" style="left:701.25px;top:547.56px;font-size:25.58px;line-height:25.58px;color:#000;transform:scaleX(1.1096);">tristique</div>
<div class="t" style="left:807.74px;top:547.56px;font-size:25.58px;line-height:25.58px;color:#000;transform:scaleX(1.0149);">senectus</div>
<div class="t" style="left:918.40px;top:547.56px;font-size:25.58px;line-height:25.58px;color:#000;transform:scaleX(1.0952);">et</div>
<div class="t" style="left:950.20px;top:547.56px;font-size:25.58px;line-height:25.58px;color:#000;transform:scaleX(1.0451);">netus</div>
<div class="t" style="left:1022.62px;top:547.56px;font-size:25.58px;line-height:25.58px;color:#000;transform:scaleX(1.1310);">et</div>
<div class="t" style="left:1054.48px;top:547.56px;font-size:25.58px;line-height:25.58px;color:#000;transform:scaleX(1.0160);">malesuada</div>
<div class="t" style="left:1191.25px;top:547.56px;font-size:25.58px;line-height:25.58px;color:#000;transform:scaleX(1.0145);">fames</div>
<div class="t" style="left:1268.99px;top:547.56px;font-size:25.58px;line-height:25.58px;color:#000;transform:scaleX(1.0096);">ac</div>
<div class="t" style="left:1303.75px;top:547.56px;font-size:25.58px;line-height:25.58px;color:#000;transform:scaleX(1.0887);">turpis</div>
<div class="t" style="left:1378.50px;top:547.56px;font-size:25.58px;line-height:25.58px;color:#000;transform:scaleX(1.0027);">egestas.</div>
<div class="t" style="left:1480.31px;top:547.56px;font-size:25.58px;line-height:25.58px;color:#000;transform:scaleX(1.0938);">Proin</div>
<div class="t" style="left:706.94px;top:586.56px;font-size:25.58px;line-height:25.58px;color:#000;transform:scaleX(1.0605);">pharetra</div>
<div class="t" style="left:817.68px;top:586.56px;font-size:25.58px;line-height:25.58px;color:#000;transform:scaleX(1.0698);">nonummy</div>
<div class="t" style="left:945.97px;top:586.56px;font-size:25.58px;line-height:25.58px;color:#000;transform:scaleX(1.0328);">pede.</div>
<div class="t" style="left:1019.09px;top:586.56px;font-size:25.58px;line-height:25.58px;color:#000;transform:scaleX(1.0811);">Mauris</div>
<div class="t" style="left:1108.93px;top:586.56px;font-size:25.58px;line-height:25.58px;color:#000;transform:scaleX(1.0714);">et</div>
<div class="t" style="left:1140.17px;top:586.56px;font-size:25.58px;line-height:25.58px;color:#000;transform:scaleX(1.0833);">orci.</div>
<div class="t" style="left:307.50px;top:645.26px;font-size:25.58px;line-height:25.58px;color:#000;transform:scaleX(1.0201);">Aenean</div>
<div class="t" style="left:405.25px;top:645.26px;font-size:25.58px;line-height:25.58px;color:#000;">nec</div>
<div class="t" style="left:454.41px;top:645.26px;font-size:25.58px;line-height:25.58px;color:#000;transform:scaleX(1.0882);">lorem.</div>
<div class="t" style="left:538.33px;top:645.26px;font-size:25.58px;line-height:25.58px;color:#000;transform:scaleX(1.0833);">In</div>
<div class="t" style="left:568.30px;top:645.26px;font-size:25.58px;line-height:25.58px;color:#000;transform:scaleX(1.1994);">porttitor.</div>
<div class="t" style="left:684.19px;top:645.26px;font-size:25.58px;line-height:25.58px;color:#000;transform:scaleX(1.0312);">Donec</div>
<div class="t" style="left:766.91px;top:645.26px;font-size:25.58px;line-height:25.58px;color:#000;transform:scaleX(1.0909);">laoreet</div>
<div class="t" style="left:859.42px;top:645.26px;font-size:25.58px;line-height:25.58px;color:#000;transform:scaleX(1.0766);">nonummy</div>
<div class="t" style="left:987.71px;top:645.26px;font-size:25.58px;line-height:25.58px;color:#000;transform:scaleX(1.0433);">augue.</div>
<div class="t" style="left:306.51px;top:705.46px;font-size:25.58px;line-height:25.58px;color:#000;transform:scaleX(0.9914);">Suspendisse</div>
<div class="t" style="left:458.89px;top:705.46px;font-size:25.58px;line-height:25.58px;color:#000;transform:scaleX(1.1094);">dui</div>
<div class="t" style="left:503.94px;top:705.46px;font-size:25.58px;line-height:25.58px;color:#000;transform:scaleX(1.0588);">purus,</div>
<div class="t" style="left:584.47px;top:705.46px;font-size:25.58px;line-height:25.58px;color:#000;transform:scaleX(1.0312);">scelerisque</div>
<div class="t" style="left:725.15px;top:705.46px;font-size:25.58px;line-height:25.58px;color:#000;transform:scaleX(1.1000);">at,</div>
<div class="t" style="left:763.75px;top:705.46px;font-size:25.58px;line-height:25.58px;color:#000;transform:scaleX(1.0995);">vulputate</div>
<div class="t" style="left:885.00px;top:705.46px;font-size:25.58px;line-height:25.58px;color:#000;transform:scaleX(1.0678);">vitae,</div>
<div class="t" style="left:956.37px;top:705.46px;font-size:25.58px;line-height:25.58px;color:#000;transform:scaleX(1.1295);">pretium</div>
<div class="t" style="left:1058.90px;top:705.46px;font-size:25.58px;line-height:25.58px;color:#000;transform:scaleX(1.1042);">mattis,</div>
<div class="t" style="left:1147.69px;top:705.46px;font-size:25.58px;line-height:25.58px;color:#000;transform:scaleX(1.0625);">nunc.</div>
<div class="t" style="left:1220.32px;top:705.46px;font-size:25.58px;line-height:25.58px;color:#000;transform:scaleX(1.0878);">Mauris</div>
<div class="t" style="left:1310.20px;top:705.46px;font-size:25.58px;line-height:25.58px;color:#000;transform:scaleX(1.0459);">eget</div>
<div class="t" style="left:1370.19px;top:705.46px;font-size:25.58px;line-height:25.58px;color:#000;transform:scaleX(1.0616);">neque</div>
<div class="t" style="left:1452.05px;top:705.46px;font-size:25.58px;line-height:25.58px;color:#000;transform:scaleX(0.9524);">at</div>
<div class="t" style="left:1481.97px;top:705.46px;font-size:25.58px;line-height:25.58px;color:#000;transform:scaleX(1.0326);">sem</div>
<div class="t" style="left:307.50px;top:744.26px;font-size:25.58px;line-height:25.58px;color:#000;transform:scaleX(1.0436);">venenatis</div>
<div class="t" style="left:428.42px;top:744.26px;font-size:25.58px;line-height:25.58px;color:#000;transform:scaleX(1.0824);">eleifend.</div>
<div class="t" style="left:539.06px;top:744.26px;font-size:25.58px;line-height:25.58px;color:#000;transform:scaleX(1.0938);">Ut</div>
<div class="t" style="left:575.15px;top:744.26px;font-size:25.58px;line-height:25.58px;color:#000;transform:scaleX(1.1022);">nonummy.</div>
<div style="position:absolute;left:0;top:929px;width:1920px;height:22px;background:#f4f4f4;border-top:1px solid #c8c6c4;box-sizing:border-box"></div>
<div class="t" style="left:9.00px;top:936.88px;font-size:13.08px;line-height:13.08px;color:#3b3b3b;">Pagina 1 di 1</div>
<div class="t" style="left:110.00px;top:936.88px;font-size:13.08px;line-height:13.08px;color:#3b3b3b;transform:scaleX(1.0291);">20 di 86 parole</div>
<div class="t" style="left:262.51px;top:936.88px;font-size:13.08px;line-height:13.08px;color:#3b3b3b;transform:scaleX(0.9862);">Inglese (Stati Uniti)</div>
<div class="t" style="left:394.00px;top:936.88px;font-size:13.08px;line-height:13.08px;color:#3b3b3b;transform:scaleX(1.0128);">Completamento del testo: attivato</div>
<div class="t" style="left:637.50px;top:936.88px;font-size:13.08px;line-height:13.08px;color:#3b3b3b;transform:scaleX(0.9925);">Accessibilità: conforme</div>
<div class="t" style="left:1499.04px;top:936.88px;font-size:13.08px;line-height:13.08px;color:#3b3b3b;transform:scaleX(0.9559);">Focus</div>
<div class="t" style="left:1877.80px;top:936.88px;font-size:13.08px;line-height:13.08px;color:#3b3b3b;transform:scaleX(0.9531);">160%</div>
<svg style="position:absolute;left:0;top:0" width="1920" height="951" viewBox="0 0 1920 951"><path d="M223.8,935.5 H231.5 V948 M231.5,935.5 H239.8 V942.5 M231.5,948.5 L223.8,948.5 V935.5" fill="none" stroke="#424242" stroke-width="1.3" stroke-linejoin="round" stroke-linecap="round" /><polyline points="229.5,947 233,950.5 240.2,943.5" fill="none" stroke="#424242" stroke-width="1.3" stroke-linecap="round" stroke-linejoin="round"/><circle cx="624.6" cy="936.8" r="2.3" fill="none" stroke="#333" stroke-width="1.2"/><path d="M622.2,938.5 C620,936.5 617.5,937.5 617.5,939.5 C617.5,941.5 620.5,941.5 621.5,942 C622,945 621.5,948 620.2,951" fill="none" stroke="#333" stroke-width="1.2" stroke-linejoin="round" stroke-linecap="round" /><path d="M627,938.5 C629,936.5 631.8,937.5 631.8,939.5 C631.8,941 629.5,941.5 627.8,942 V944.5" fill="none" stroke="#333" stroke-width="1.2" stroke-linejoin="round" stroke-linecap="round" /><polyline points="625.2,947.2 628.5,950.5 635.3,944.3" fill="none" stroke="#333" stroke-width="1.2" stroke-linecap="round" stroke-linejoin="round"/><path d="M1479.3,937.2 V934.3 H1482.2 M1494.2,934.3 H1497 V937.2 M1479.3,947.8 V950.7 H1482.2 M1494.2,950.7 H1497 V947.8" fill="none" stroke="#333" stroke-width="1.2" stroke-linejoin="round" stroke-linecap="butt"/><path d="M1482.8,936.8 H1489.5 L1492.8,940 V948.5 H1482.8 Z" fill="none" stroke="#333" stroke-width="1.2" stroke-linejoin="round" stroke-linecap="round" /><path d="M1564.5,935.5 H1572.2 V950.5 H1564.5 Z M1572.6,935.5 H1580.4 V950.5 H1572.6 Z" fill="none" stroke="#424242" stroke-width="1.2" stroke-linejoin="round" stroke-linecap="round" /><line x1="1566.2" y1="939" x2="1570.5" y2="939" stroke="#777" stroke-width="0.9" stroke-linecap="butt"/><line x1="1574.3" y1="939" x2="1578.6" y2="939" stroke="#777" stroke-width="0.9" stroke-linecap="butt"/><line x1="1566.2" y1="941.8" x2="1570.5" y2="941.8" stroke="#777" stroke-width="0.9" stroke-linecap="butt"/><line x1="1574.3" y1="941.8" x2="1578.6" y2="941.8" stroke="#777" stroke-width="0.9" stroke-linecap="butt"/><line x1="1566.2" y1="944.6" x2="1570.5" y2="944.6" stroke="#777" stroke-width="0.9" stroke-linecap="butt"/><line x1="1574.3" y1="944.6" x2="1578.6" y2="944.6" stroke="#777" stroke-width="0.9" stroke-linecap="butt"/><line x1="1566.2" y1="947.4" x2="1570.5" y2="947.4" stroke="#777" stroke-width="0.9" stroke-linecap="butt"/><line x1="1574.3" y1="947.4" x2="1578.6" y2="947.4" stroke="#777" stroke-width="0.9" stroke-linecap="butt"/></svg>
<div style="position:absolute;left:1598px;top:930px;width:50px;height:21px;background:#e0e0e0"></div>
<svg style="position:absolute;left:0;top:0" width="1920" height="951" viewBox="0 0 1920 951"><rect x="1615.7" y="935.2" width="12.8" height="16" rx="0" fill="none" stroke="#424242" stroke-width="1.3" /><line x1="1617.8" y1="938.5" x2="1626.4" y2="938.5" stroke="#555" stroke-width="0.9" stroke-linecap="butt"/><line x1="1617.8" y1="941" x2="1626.4" y2="941" stroke="#555" stroke-width="0.9" stroke-linecap="butt"/><line x1="1617.8" y1="943.5" x2="1626.4" y2="943.5" stroke="#555" stroke-width="0.9" stroke-linecap="butt"/><line x1="1617.8" y1="946" x2="1626.4" y2="946" stroke="#555" stroke-width="0.9" stroke-linecap="butt"/><line x1="1617.8" y1="948.5" x2="1626.4" y2="948.5" stroke="#555" stroke-width="0.9" stroke-linecap="butt"/><path d="M1678,938 V935.5 H1664.6 V950.5 H1671" fill="none" stroke="#424242" stroke-width="1.3" stroke-linejoin="round" stroke-linecap="round" /><line x1="1666.6" y1="938.5" x2="1676" y2="938.5" stroke="#555" stroke-width="0.9" stroke-linecap="butt"/><line x1="1666.6" y1="941.2" x2="1676" y2="941.2" stroke="#555" stroke-width="0.9" stroke-linecap="butt"/><circle cx="1677.2" cy="946.5" r="4.6" fill="#f4f4f4" stroke="#333" stroke-width="1.1"/><ellipse cx="1677.2" cy="946.5" rx="1.9" ry="4.6" fill="none" stroke="#333" stroke-width="0.9"/><line x1="1672.6" y1="946.5" x2="1681.8" y2="946.5" stroke="#333" stroke-width="0.9" stroke-linecap="butt"/><line x1="1705.3" y1="942.6" x2="1714.3" y2="942.6" stroke="#424242" stroke-width="1.2" stroke-linecap="butt"/><line x1="1721.3" y1="942.8" x2="1845.5" y2="942.8" stroke="#8a8a8a" stroke-width="1" stroke-linecap="butt"/><line x1="1783.8" y1="939.5" x2="1783.8" y2="946" stroke="#777" stroke-width="1" stroke-linecap="butt"/><rect x="1789.5" y="936" width="6.8" height="14" rx="1" fill="#5f5f5f" stroke="none" stroke-width="1" /><line x1="1851.2" y1="942.6" x2="1861.6" y2="942.6" stroke="#424242" stroke-width="1.2" stroke-linecap="butt"/><line x1="1856.4" y1="937.4" x2="1856.4" y2="947.8" stroke="#424242" stroke-width="1.2" stroke-linecap="butt"/></svg>
<div style="position:absolute;left:771.5px;top:118.5px;width:203px;height:316px;background:#fff;border:1px solid #cfcfcf;border-radius:6px;box-sizing:border-box;box-shadow:0 3px 8px rgba(0,0,0,0.18)"></div>
<div class="t" style="left:789.30px;top:131.85px;font-size:15.12px;line-height:15.12px;color:#1a1a1a;font-weight:700;transform:scaleX(0.9607);">Colori tema</div>
<div class="t" style="left:789.30px;top:301.35px;font-size:15.12px;line-height:15.12px;color:#1a1a1a;font-weight:700;transform:scaleX(0.9577);">Colori standard</div>
<svg style="position:absolute;left:0;top:0" width="1920" height="951" viewBox="0 0 1920 951"><rect x="775.5" y="160.5" width="15" height="15" rx="0" fill="#FFFFFF" stroke="#e3e3e3" stroke-width="1" /><rect x="795.5" y="160.5" width="15" height="15" rx="0" fill="#000000" stroke="#e3e3e3" stroke-width="1" /><rect x="815.5" y="160.5" width="15" height="15" rx="0" fill="#E7E6E6" stroke="#e3e3e3" stroke-width="1" /><rect x="835.5" y="160.5" width="15" height="15" rx="0" fill="#44546A" stroke="#e3e3e3" stroke-width="1" /><rect x="855.5" y="160.5" width="15" height="15" rx="0" fill="#4472C4" stroke="#e3e3e3" stroke-width="1" /><rect x="875.5" y="160.5" width="15" height="15" rx="0" fill="#ED7D31" stroke="#e3e3e3" stroke-width="1" /><rect x="895.5" y="160.5" width="15" height="15" rx="0" fill="#A5A5A5" stroke="#e3e3e3" stroke-width="1" /><rect x="915.5" y="160.5" width="15" height="15" rx="0" fill="#FFC000" stroke="#e3e3e3" stroke-width="1" /><rect x="935.5" y="160.5" width="15" height="15" rx="0" fill="#5B9BD5" stroke="#e3e3e3" stroke-width="1" /><rect x="955.5" y="160.5" width="15" height="15" rx="0" fill="#70AD47" stroke="#e3e3e3" stroke-width="1" /><rect x="775.5" y="192.5" width="15" height="79" rx="0" fill="none" stroke="#e6e6e6" stroke-width="1" /><rect x="776.0" y="193.0" width="14" height="15.8" rx="0" fill="#F2F2F2" stroke="none" stroke-width="1" /><rect x="776.0" y="208.8" width="14" height="15.8" rx="0" fill="#D9D9D9" stroke="none" stroke-width="1" /><rect x="776.0" y="224.6" width="14" height="15.8" rx="0" fill="#BFBFBF" stroke="none" stroke-width="1" /><rect x="776.0" y="240.4" width="14" height="15.8" rx="0" fill="#A6A6A6" stroke="none" stroke-width="1" /><rect x="776.0" y="256.2" width="14" height="15.8" rx="0" fill="#808080" stroke="none" stroke-width="1" /><rect x="795.5" y="192.5" width="15" height="79" rx="0" fill="none" stroke="#e6e6e6" stroke-width="1" /><rect x="796.0" y="193.0" width="14" height="15.8" rx="0" fill="#7F7F7F" stroke="none" stroke-width="1" /><rect x="796.0" y="208.8" width="14" height="15.8" rx="0" fill="#595959" stroke="none" stroke-width="1" /><rect x="796.0" y="224.6" width="14" height="15.8" rx="0" fill="#404040" stroke="none" stroke-width="1" /><rect x="796.0" y="240.4" width="14" height="15.8" rx="0" fill="#262626" stroke="none" stroke-width="1" /><rect x="796.0" y="256.2" width="14" height="15.8" rx="0" fill="#0D0D0D" stroke="none" stroke-width="1" /><rect x="815.5" y="192.5" width="15" height="79" rx="0" fill="none" stroke="#e6e6e6" stroke-width="1" /><rect x="816.0" y="193.0" width="14" height="15.8" rx="0" fill="#D0CECE" stroke="none" stroke-width="1" /><rect x="816.0" y="208.8" width="14" height="15.8" rx="0" fill="#AEABAB" stroke="none" stroke-width="1" /><rect x="816.0" y="224.6" width="14" height="15.8" rx="0" fill="#757171" stroke="none" stroke-width="1" /><rect x="816.0" y="240.4" width="14" height="15.8" rx="0" fill="#3A3838" stroke="none" stroke-width="1" /><rect x="816.0" y="256.2" width="14" height="15.8" rx="0" fill="#171616" stroke="none" stroke-width="1" /><rect x="835.5" y="192.5" width="15" height="79" rx="0" fill="none" stroke="#e6e6e6" stroke-width="1" /><rect x="836.0" y="193.0" width="14" height="15.8" rx="0" fill="#D6DCE5" stroke="none" stroke-width="1" /><rect x="836.0" y="208.8" width="14" height="15.8" rx="0" fill="#ADB9CA" stroke="none" stroke-width="1" /><rect x="836.0" y="224.6" width="14" height="15.8" rx="0" fill="#8497B0" stroke="none" stroke-width="1" /><rect x="836.0" y="240.4" width="14" height="15.8" rx="0" fill="#333F50" stroke="none" stroke-width="1" /><rect x="836.0" y="256.2" width="14" height="15.8" rx="0" fill="#222A35" stroke="none" stroke-width="1" /><rect x="855.5" y="192.5" width="15" height="79" rx="0" fill="none" stroke="#e6e6e6" stroke-width="1" /><rect x="856.0" y="193.0" width="14" height="15.8" rx="0" fill="#DAE3F3" stroke="none" stroke-width="1" /><rect x="856.0" y="208.8" width="14" height="15.8" rx="0" fill="#B4C7E7" stroke="none" stroke-width="1" /><rect x="856.0" y="224.6" width="14" height="15.8" rx="0" fill="#8FAADC" stroke="none" stroke-width="1" /><rect x="856.0" y="240.4" width="14" height="15.8" rx="0" fill="#2F5597" stroke="none" stroke-width="1" /><rect x="856.0" y="256.2" width="14" height="15.8" rx="0" fill="#203864" stroke="none" stroke-width="1" /><rect x="875.5" y="192.5" width="15" height="79" rx="0" fill="none" stroke="#e6e6e6" stroke-width="1" /><rect x="876.0" y="193.0" width="14" height="15.8" rx="0" fill="#FBE5D6" stroke="none" stroke-width="1" /><rect x="876.0" y="208.8" width="14" height="15.8" rx="0" fill="#F8CBAD" stroke="none" stroke-width="1" /><rect x="876.0" y="224.6" width="14" height="15.8" rx="0" fill="#F4B183" stroke="none" stroke-width="1" /><rect x="876.0" y="240.4" width="14" height="15.8" rx="0" fill="#C55A11" stroke="none" stroke-width="1" /><rect x="876.0" y="256.2" width="14" height="15.8" rx="0" fill="#843C0C" stroke="none" stroke-width="1" /><rect x="895.5" y="192.5" width="15" height="79" rx="0" fill="none" stroke="#e6e6e6" stroke-width="1" /><rect x="896.0" y="193.0" width="14" height="15.8" rx="0" fill="#EDEDED" stroke="none" stroke-width="1" /><rect x="896.0" y="208.8" width="14" height="15.8" rx="0" fill="#DBDBDB" stroke="none" stroke-width="1" /><rect x="896.0" y="224.6" width="14" height="15.8" rx="0" fill="#C9C9C9" stroke="none" stroke-width="1" /><rect x="896.0" y="240.4" width="14" height="15.8" rx="0" fill="#7B7B7B" stroke="none" stroke-width="1" /><rect x="896.0" y="256.2" width="14" height="15.8" rx="0" fill="#525252" stroke="none" stroke-width="1" /><rect x="915.5" y="192.5" width="15" height="79" rx="0" fill="none" stroke="#e6e6e6" stroke-width="1" /><rect x="916.0" y="193.0" width="14" height="15.8" rx="0" fill="#FFF2CC" stroke="none" stroke-width="1" /><rect x="916.0" y="208.8" width="14" height="15.8" rx="0" fill="#FFE699" stroke="none" stroke-width="1" /><rect x="916.0" y="224.6" width="14" height="15.8" rx="0" fill="#FFD966" stroke="none" stroke-width="1" /><rect x="916.0" y="240.4" width="14" height="15.8" rx="0" fill="#BF9000" stroke="none" stroke-width="1" /><rect x="916.0" y="256.2" width="14" height="15.8" rx="0" fill="#7F6000" stroke="none" stroke-width="1" /><rect x="935.5" y="192.5" width="15" height="79" rx="0" fill="none" stroke="#e6e6e6" stroke-width="1" /><rect x="936.0" y="193.0" width="14" height="15.8" rx="0" fill="#DEEBF7" stroke="none" stroke-width="1" /><rect x="936.0" y="208.8" width="14" height="15.8" rx="0" fill="#BDD7EE" stroke="none" stroke-width="1" /><rect x="936.0" y="224.6" width="14" height="15.8" rx="0" fill="#9DC3E6" stroke="none" stroke-width="1" /><rect x="936.0" y="240.4" width="14" height="15.8" rx="0" fill="#2E75B6" stroke="none" stroke-width="1" /><rect x="936.0" y="256.2" width="14" height="15.8" rx="0" fill="#1F4E79" stroke="none" stroke-width="1" /><rect x="955.5" y="192.5" width="15" height="79" rx="0" fill="none" stroke="#e6e6e6" stroke-width="1" /><rect x="956.0" y="193.0" width="14" height="15.8" rx="0" fill="#E2F0D9" stroke="none" stroke-width="1" /><rect x="956.0" y="208.8" width="14" height="15.8" rx="0" fill="#C5E0B4" stroke="none" stroke-width="1" /><rect x="956.0" y="224.6" width="14" height="15.8" rx="0" fill="#A9D18E" stroke="none" stroke-width="1" /><rect x="956.0" y="240.4" width="14" height="15.8" rx="0" fill="#548235" stroke="none" stroke-width="1" /><rect x="956.0" y="256.2" width="14" height="15.8" rx="0" fill="#385723" stroke="none" stroke-width="1" /><rect x="875.8" y="224.3" width="14.4" height="15.6" rx="0" fill="none" stroke="#f08a24" stroke-width="1.3" /><rect x="877.2" y="225.7" width="11.6" height="12.8" rx="0" fill="none" stroke="#ffe8a8" stroke-width="1" /><line x1="772.5" y1="287.6" x2="973" y2="287.6" stroke="#d6d6d6" stroke-width="1" stroke-linecap="butt"/><rect x="775.5" y="330" width="15" height="15" rx="0" fill="#C00000" stroke="#e6e6e6" stroke-width="1" /><rect x="795.5" y="330" width="15" height="15" rx="0" fill="#FF0000" stroke="#e6e6e6" stroke-width="1" /><rect x="815.5" y="330" width="15" height="15" rx="0" fill="#FFC000" stroke="#e6e6e6" stroke-width="1" /><rect x="835.5" y="330" width="15" height="15" rx="0" fill="#FFFF00" stroke="#e6e6e6" stroke-width="1" /><rect x="855.5" y="330" width="15" height="15" rx="0" fill="#92D050" stroke="#e6e6e6" stroke-width="1" /><rect x="875.5" y="330" width="15" height="15" rx="0" fill="#00B050" stroke="#e6e6e6" stroke-width="1" /><rect x="895.5" y="330" width="15" height="15" rx="0" fill="#00B0F0" stroke="#e6e6e6" stroke-width="1" /><rect x="915.5" y="330" width="15" height="15" rx="0" fill="#0070C0" stroke="#e6e6e6" stroke-width="1" /><rect x="935.5" y="330" width="15" height="15" rx="0" fill="#002060" stroke="#e6e6e6" stroke-width="1" /><rect x="955.5" y="330" width="15" height="15" rx="0" fill="#7030A0" stroke="#e6e6e6" stroke-width="1" /><line x1="772.5" y1="358.6" x2="973" y2="358.6" stroke="#d6d6d6" stroke-width="1" stroke-linecap="butt"/></svg>
<div style="position:absolute;left:772.5px;top:359.5px;width:200.5px;height:35px;background:#ebebeb"></div>
<svg style="position:absolute;left:0;top:0" width="1920" height="951" viewBox="0 0 1920 951"><rect x="787.8" y="367.8" width="18.6" height="18.4" rx="0" fill="none" stroke="#dedede" stroke-width="1" /><line x1="772.5" y1="395.2" x2="973" y2="395.2" stroke="#d6d6d6" stroke-width="1" stroke-linecap="butt"/><path d="M789.3,408 C791,404 796,402.8 799.5,403.4 C804.5,404.3 807,409 806.3,413.5 C805.5,418.5 801.5,422.5 797.5,422.4 C795.5,422.3 795.8,420 795.5,418.5 C795.2,416.5 793.5,415.5 791,415.5 C788,415.5 786.8,412 789.3,408 Z" fill="none" stroke="#333" stroke-width="1.1" stroke-linejoin="round" stroke-linecap="round" /><circle cx="793" cy="409.1" r="1.05" fill="#1e88d6"/><circle cx="797.1" cy="407.6" r="1.05" fill="#3a9f3a"/><circle cx="800.7" cy="409.1" r="1.05" fill="#e8892b"/><circle cx="801.9" cy="413" r="1.05" fill="#e0442e"/><circle cx="800.7" cy="416.6" r="1.05" fill="#9b4fc0"/><line x1="817.8" y1="384.8" x2="825.6" y2="384.8" stroke="#333" stroke-width="1" stroke-linecap="butt"/><line x1="827.2" y1="421.3" x2="831.6" y2="421.3" stroke="#333" stroke-width="1" stroke-linecap="butt"/></svg>
<div class="t" style="left:816.29px;top:370.97px;font-size:14.39px;line-height:14.39px;color:#242424;transform:scaleX(1.0132);">Nessun colore</div>
<div class="t" style="left:818.50px;top:407.77px;font-size:14.39px;line-height:14.39px;color:#242424;transform:scaleX(1.0554);">Altri colori...</div>
</body></html>
